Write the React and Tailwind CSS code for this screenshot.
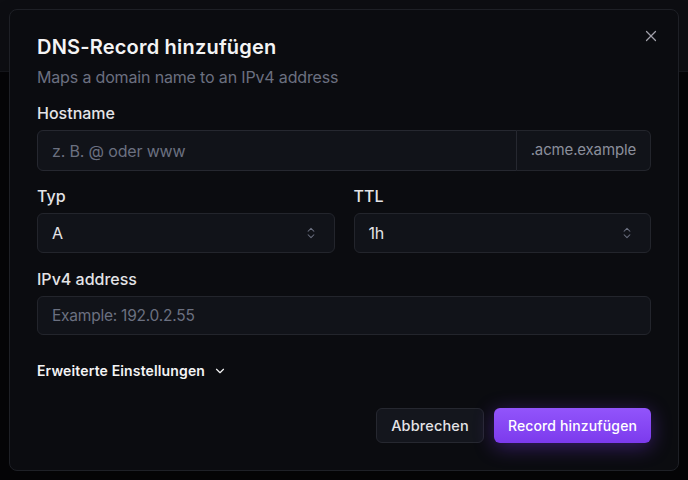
import React from 'react';
import { X, ChevronsUpDown, ChevronDown } from 'lucide-react';

// Native-looking select box with the up/down chevron on the right
const SelectBox = ({ value }) => (
  <div className="flex h-10 items-center justify-between rounded-md border border-[#23252c] bg-[#111319] pl-[14px] pr-[16px]">
    <span className="text-base tracking-[-0.01em] text-[#e4e4e7]">{value}</span>
    <ChevronsUpDown className="h-[14px] w-[14px] text-[#6b7080]" strokeWidth={1.75} />
  </div>
);

const Field = ({ label, children }) => (
  <div>
    <label className="mb-[5px] block text-base font-medium leading-6 text-[#e4e4e7]">{label}</label>
    {children}
  </div>
);

export default function App() {
  return (
    <div className="relative h-[480px] w-[688px] overflow-hidden bg-[#050507] font-['Inter',sans-serif] antialiased">
      {/* page behind the backdrop */}
      <div className="h-[72px] border-b border-[#16171c] bg-[#0d0e12]" />

      <div className="absolute inset-0 flex items-center justify-center">
        <div className="relative flex h-[462px] w-[670px] flex-col rounded-lg border border-[#1e2026] bg-[#0b0c10] px-[27px] pt-[23px] shadow-2xl">
          <button className="absolute right-[18px] top-[17px] text-[#a1a1aa]">
            <X className="h-[18px] w-[18px]" strokeWidth={1.6} />
          </button>

          <h2 className="text-xl font-semibold leading-7 tracking-[0.01em] text-[#f4f4f5]">DNS-Record hinzufügen</h2>
          <p className="mt-[4px] text-base leading-6 tracking-[-0.01em] text-[#6b7080]">Maps a domain name to an IPv4 address</p>

          <div className="mt-[12px]">
            <Field label="Hostname">
              <div className="flex h-[41px]">
                <input
                  placeholder="z. B. @ oder www"
                  className="min-w-0 flex-1 rounded-l-md border border-[#262830] bg-[#111319] px-[14px] text-base tracking-[-0.01em] text-[#e4e4e7] outline-none placeholder:text-[#6b7080]"
                />
                <div className="flex items-center rounded-r-md border border-l-0 border-[#23252c] bg-[#111319] px-[14px] text-[15px] tracking-[-0.01em] text-[#8b8f9c]">
                  .acme.example
                </div>
              </div>
            </Field>
          </div>

          <div className="mt-[13px] grid grid-cols-2 gap-[19px]">
            <Field label="Typ">
              <SelectBox value="A" />
            </Field>
            <Field label="TTL">
              <SelectBox value="1h" />
            </Field>
          </div>

          <div className="mt-[14px]">
            <Field label="IPv4 address">
              <input
                placeholder="Example: 192.0.2.55"
                className="h-[39px] w-full rounded-md border border-[#23252c] bg-[#111319] px-[14px] text-[15.5px] tracking-[-0.015em] text-[#e4e4e7] outline-none placeholder:text-[#6b7080]"
              />
            </Field>
          </div>

          <button className="mt-[26px] flex items-center gap-[8px] self-start text-sm font-semibold leading-5 tracking-[0.01em] text-[#f4f4f5]">
            Erweiterte Einstellungen
            <ChevronDown className="h-[14px] w-[14px]" strokeWidth={2} />
          </button>

          <div className="mt-[27px] flex justify-end gap-[10px]">
            <button className="h-[35px] w-[108px] rounded-md border border-[#262830] bg-[#14161d] text-[14.5px] font-medium tracking-[0.01em] text-[#e4e4e7]">
              Abbrechen
            </button>
            <button className="h-[35px] w-[157px] rounded-md bg-gradient-to-b from-[#9254fb] to-[#7c3aed] text-[14px] font-medium tracking-[0.01em] text-white shadow-[0_4px_20px_rgba(124,58,237,0.4)]">
              Record hinzufügen
            </button>
          </div>
        </div>
      </div>
    </div>
  );
}
